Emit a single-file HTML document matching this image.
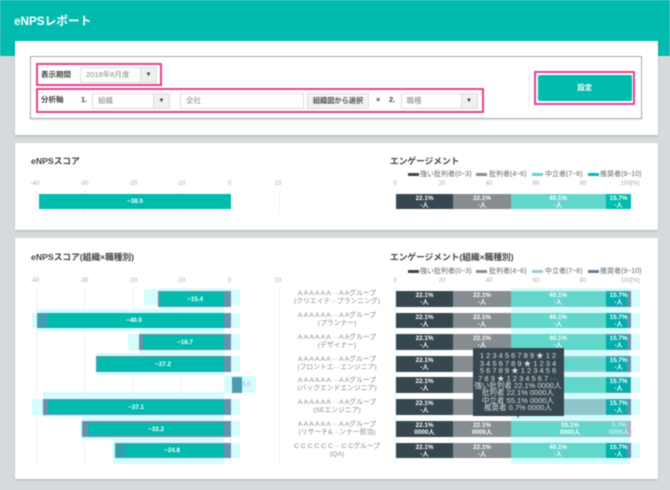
<!DOCTYPE html>
<html lang="ja"><head><meta charset="utf-8"><title>eNPSレポート</title>
<style>
html,body{margin:0;padding:0}
body{width:670px;height:490px;overflow:hidden;background:#d6dadc;font-family:"Liberation Sans","Noto Sans CJK JP",sans-serif;color:#444}
#w{position:relative;width:670px;height:490px;overflow:hidden;filter:blur(.5px)}
#w div{position:absolute;box-sizing:border-box;white-space:nowrap}
.card{background:#fff;left:15px;width:643px;box-shadow:0 1px 2px rgba(0,0,0,.18)}
.pk{border:2.3px solid #e8428f}
.sel{background:#fff;border:1px solid #ddd;font-size:7.5px;color:#888;line-height:14px;padding-left:5px;border-radius:1px}
.sel i{position:absolute;right:0;top:0;bottom:0;width:15px;background:#f0f0f0;border-left:1px solid #ddd;font-style:normal;font-size:6px;color:#333;text-align:center}
.lb{font-size:7.5px;font-weight:bold;color:#444;line-height:10px}
.h{font-size:8.7px;font-weight:bold;color:#444;line-height:12px}
.t{font-size:6px;color:#aaa;line-height:8px;transform:translateX(-50%)}
.g{width:1px;background:#f0f0f0}
.lg{font-size:7px;color:#666;line-height:9px}
.ln{height:2.5px;width:11px}
.c{background:#d3fdfd}
.bl{background:#6c8fae}
.te{background:#00bbae}
.v{font-size:6.3px;font-weight:bold;color:#fff;line-height:7px;transform:translate(-50%,1px);text-align:center}
.n{font-size:6.8px;color:#888;line-height:8px;width:110px;left:282px;text-align:center}
.d{background:#37474f}.y{background:#858d90}.l{background:#62d6cb}
.tip{font-size:7.5px;color:#ddd;line-height:7.4px;text-align:center;transform:translateX(-50%);left:518px}
</style></head><body><div id="w">
<div style="left:0;top:0;width:670px;height:56px;background:#00bbae"></div>
<div style="left:14px;top:13.5px;font-size:11.7px;font-weight:bold;color:#fff;line-height:16px">eNPSレポート</div>

<div class="card" style="top:40.5px;height:94.5px"></div>
<div style="left:30px;top:56px;width:612px;height:63px;border:1px solid #aaa;box-shadow:0 1px 1px rgba(0,0,0,.1)"></div>
<div class="pk" style="left:36px;top:62.5px;width:126px;height:23.5px"></div>
<div class="lb" style="left:41px;top:70px">表示期間</div>
<div class="sel" style="left:80px;top:67px;width:77px;height:16px">2018年8月度<i>▼</i></div>
<div class="pk" style="left:36px;top:87.5px;width:448px;height:25.5px"></div>
<div class="lb" style="left:41px;top:95px">分析軸</div>
<div class="lb" style="left:81px;top:95px">1.</div>
<div class="sel" style="left:92px;top:92.5px;width:78px;height:16px">組織<i>▼</i></div>
<div class="sel" style="left:180px;top:92.5px;width:124px;height:16px">全社</div>
<div class="sel" style="left:307px;top:92.5px;width:62px;height:16px;background:#f3f3f3;padding:0;text-align:center;color:#555;font-weight:bold;font-size:7.2px">組織図から選択</div>
<div class="lb" style="left:376px;top:95px">×</div>
<div class="lb" style="left:389px;top:95px">2.</div>
<div class="sel" style="left:400.5px;top:92.5px;width:77px;height:16px">職種<i>▼</i></div>
<div style="left:528px;top:67px;width:1px;height:41px;background:#eee"></div>
<div class="pk" style="left:533.7px;top:70.7px;width:101.5px;height:34px"></div>
<div style="left:538px;top:74.5px;width:93.5px;height:26px;background:#00bbae;border-radius:2px;color:#fff;font-size:7.5px;font-weight:bold;text-align:center;line-height:26px">設定</div>

<div class="card" style="top:143px;height:87px"></div>
<div class="h" style="left:31px;top:154.5px">eNPSスコア</div>
<div class="h" style="left:390px;top:154.5px">エンゲージメント</div>
<div class="t" style="left:35px;top:180px">-40</div><div class="t" style="left:84px;top:180px">-30</div><div class="t" style="left:133px;top:180px">-20</div><div class="t" style="left:181px;top:180px">-10</div><div class="t" style="left:229.5px;top:180px">0</div><div class="t" style="left:278px;top:180px">10</div>
<div class="g" style="left:36px;top:190px;height:23px"></div><div class="g" style="left:84px;top:190px;height:23px"></div><div class="g" style="left:133px;top:190px;height:23px"></div><div class="g" style="left:181px;top:190px;height:23px"></div><div class="g" style="left:230px;top:190px;height:23px"></div><div class="g" style="left:279px;top:190px;height:23px"></div>
<div class="te" style="left:39px;top:193.5px;width:191.5px;height:15.5px"></div>
<div class="v" style="left:135px;top:197px">−38.5</div>
<div class="ln d" style="left:407.5px;top:173px"></div><div class="lg" style="left:420px;top:170px">強い批判者(0~3)</div>
<div class="ln y" style="left:476px;top:173px"></div><div class="lg" style="left:489px;top:170px">批判者(4~6)</div>
<div class="ln l" style="left:532px;top:173px"></div><div class="lg" style="left:545px;top:170px">中立者(7~8)</div>
<div class="ln te" style="left:588px;top:173px"></div><div class="lg" style="left:600px;top:170px">推奨者(9~10)</div>
<div class="t" style="left:395px;top:180px">0</div><div class="t" style="left:442px;top:180px">20</div><div class="t" style="left:489px;top:180px">40</div><div class="t" style="left:536px;top:180px">60</div><div class="t" style="left:583px;top:180px">80</div><div class="t" style="left:630px;top:180px">100[%]</div>
<div class="d" style="left:395.5px;top:193.5px;width:57.5px;height:15.5px"></div><div class="y" style="left:453px;top:193.5px;width:57.5px;height:15.5px"></div><div class="l" style="left:510.5px;top:193.5px;width:95.5px;height:15.5px"></div><div class="te" style="left:606px;top:193.5px;width:25px;height:15.5px"></div>
<div class="v" style="left:424.5px;top:193.5px">22.1%<br>-人</div><div class="v" style="left:482px;top:193.5px">22.1%<br>-人</div><div class="v" style="left:558px;top:193.5px">40.1%<br>-人</div><div class="v" style="left:618.5px;top:193.5px">15.7%<br>-人</div>

<div class="card" style="top:238px;height:241px"></div>
<div class="h" style="left:31px;top:251px">eNPSスコア(組織×職種別)</div>
<div class="h" style="left:390px;top:251px">エンゲージメント(組織×職種別)</div>
<div class="t" style="left:35px;top:277px">-40</div><div class="t" style="left:84px;top:277px">-30</div><div class="t" style="left:133px;top:277px">-20</div><div class="t" style="left:181px;top:277px">-10</div><div class="t" style="left:229.5px;top:277px">0</div><div class="t" style="left:278px;top:277px">10</div>
<div class="g" style="left:36px;top:288px;height:176px"></div><div class="g" style="left:84px;top:288px;height:176px"></div><div class="g" style="left:133px;top:288px;height:176px"></div><div class="g" style="left:181px;top:288px;height:176px"></div><div class="g" style="left:230px;top:288px;height:176px"></div><div class="g" style="left:279px;top:288px;height:176px"></div><div class="g" style="left:395px;top:288px;height:176px"></div>

<!-- left rows: cyan -->
<div class="c" style="left:144px;top:288.5px;width:96px;height:16px"></div><div class="c" style="left:160px;top:288px;width:64px;height:21px"></div>
<div class="c" style="left:32px;top:312.5px;width:208px;height:15.5px"></div><div class="c" style="left:37px;top:309px;width:187px;height:22px"></div>
<div class="c" style="left:128px;top:334px;width:112px;height:15.5px"></div><div class="c" style="left:139px;top:331px;width:85px;height:22px"></div>
<div class="c" style="left:96px;top:356px;width:144px;height:15.5px"></div><div class="c" style="left:96px;top:353px;width:128px;height:22px"></div>
<div class="c" style="left:224px;top:376px;width:32px;height:17px"></div>
<div class="c" style="left:32px;top:399px;width:208px;height:15.5px"></div><div class="c" style="left:43px;top:392px;width:181px;height:25px"></div>
<div class="c" style="left:80px;top:421px;width:160px;height:15.5px"></div><div class="c" style="left:82px;top:417px;width:142px;height:23px"></div>
<div class="c" style="left:112px;top:442.5px;width:128px;height:15.5px"></div><div class="c" style="left:113px;top:440px;width:111px;height:24px"></div>
<!-- left rows: blue + teal -->
<div class="bl" style="left:157.5px;top:291px;width:73px;height:15.5px"></div><div class="te" style="left:160px;top:292px;width:64px;height:13.5px"></div><div class="v" style="left:195px;top:294.5px">−15.4</div>
<div class="bl" style="left:36.5px;top:312.5px;width:194px;height:15.5px"></div><div class="te" style="left:48px;top:312.5px;width:176px;height:15.5px"></div><div style="left:37.5px;top:312.5px;width:10.5px;height:15.5px;background:#3a9fae"></div><div class="v" style="left:134px;top:316px">−40.0</div>
<div class="bl" style="left:139px;top:334px;width:91.5px;height:15.5px"></div><div class="te" style="left:143px;top:335px;width:81px;height:13.5px"></div><div class="v" style="left:185px;top:337.5px">−18.7</div>
<div class="bl" style="left:96px;top:356px;width:134.5px;height:15.5px"></div><div class="te" style="left:97px;top:357px;width:127px;height:13.5px"></div><div class="v" style="left:163px;top:359.5px">−27.2</div>
<div style="left:231.5px;top:377px;width:10px;height:15.5px;background:#4a9bb0"></div><div style="left:242px;top:381px;font-size:6px;color:#aaa;line-height:8px">3.0</div>
<div class="bl" style="left:42.5px;top:399px;width:188px;height:15.5px"></div><div class="te" style="left:48px;top:400px;width:176px;height:13.5px"></div><div class="v" style="left:136px;top:402.5px">−37.1</div>
<div class="bl" style="left:82px;top:421px;width:148.5px;height:15.5px"></div><div class="te" style="left:88px;top:422.5px;width:136px;height:12.5px"></div><div class="v" style="left:156px;top:424.5px">−32.2</div>
<div class="bl" style="left:115px;top:442.5px;width:115.5px;height:15.5px"></div><div class="te" style="left:125px;top:443.5px;width:99px;height:13.5px"></div><div style="left:115px;top:443.5px;width:10px;height:13.5px;background:#2f9fb0"></div><div class="v" style="left:172px;top:446px">−24.8</div>

<!-- names -->
<div class="n" style="top:290px">A A A A A A ···A Aグループ<br>(クリエイテ···プランニング)</div>
<div class="n" style="top:312px">A A A A A A ···A Aグループ<br>(プランナー)</div>
<div class="n" style="top:334px">A A A A A A ···A Aグループ<br>(デザイナー)</div>
<div class="n" style="top:355.5px">A A A A A A ···A Aグループ<br>(フロントエ···エンジニア)</div>
<div class="n" style="top:377px">A A A A A A ···A Aグループ<br>(バックエンドエンジニア)</div>
<div class="n" style="top:399px">A A A A A A ···A Aグループ<br>(SEエンジニア)</div>
<div class="n" style="top:421px">A A A A A A ···A Aグループ<br>(リサーチ&amp;···ンナー担当)</div>
<div class="n" style="top:442.5px">C C C C C C ···C Cグループ<br>(QA)</div>

<!-- right header -->
<div class="ln d" style="left:407.5px;top:270px"></div><div class="lg" style="left:420px;top:267px">強い批判者(0~3)</div>
<div class="ln y" style="left:476px;top:270px"></div><div class="lg" style="left:489px;top:267px">批判者(4~6)</div>
<div class="ln" style="left:532px;top:270px;background:#a3c4d6"></div><div class="lg" style="left:545px;top:267px">中立者(7~8)</div>
<div class="ln" style="left:588px;top:270px;background:#5f7fa8"></div><div class="lg" style="left:600px;top:267px">推奨者(9~10)</div>
<div class="t" style="left:395px;top:277px">0</div><div class="t" style="left:442px;top:277px">20</div><div class="t" style="left:489px;top:277px">40</div><div class="t" style="left:536px;top:277px">60</div><div class="t" style="left:583px;top:277px">80</div><div class="t" style="left:630px;top:277px">100[%]</div>

<!-- right cyan -->
<div class="c" style="left:511px;top:288px;width:119px;height:176px"></div>
<div class="c" style="left:630px;top:288.5px;width:10px;height:18px"></div><div class="c" style="left:630px;top:312.5px;width:10px;height:15.5px"></div><div class="c" style="left:630px;top:334px;width:10px;height:15.5px"></div><div class="c" style="left:630px;top:356px;width:10px;height:15.5px"></div><div class="c" style="left:630px;top:377px;width:10px;height:15.5px"></div><div class="c" style="left:630px;top:399px;width:10px;height:15.5px"></div><div class="c" style="left:630px;top:442.5px;width:10px;height:15.5px"></div>

<!-- right rows -->
<div class="d" style="left:395.5px;top:291px;width:57.5px;height:15.5px"></div><div class="y" style="left:453px;top:291px;width:58px;height:15.5px"></div><div style="left:511px;top:291px;width:95px;height:15.5px;background:#9cc7cf"></div><div class="l" style="left:511px;top:292px;width:95px;height:13.5px"></div><div class="bl" style="left:606px;top:291px;width:24.5px;height:15.5px"></div><div class="te" style="left:606px;top:291.5px;width:21px;height:14px;background:#00aeac"></div>
<div class="d" style="left:395.5px;top:312.5px;width:57.5px;height:15.5px"></div><div class="y" style="left:453px;top:312.5px;width:58px;height:15.5px"></div><div class="l" style="left:511px;top:312.5px;width:95px;height:15.5px"></div><div class="bl" style="left:606px;top:312.5px;width:24.5px;height:15.5px"></div><div class="te" style="left:606px;top:313px;width:21px;height:14.5px;background:#00aeac"></div>
<div class="d" style="left:395.5px;top:334px;width:57.5px;height:15.5px"></div><div class="y" style="left:453px;top:334px;width:58px;height:15.5px"></div><div class="l" style="left:511px;top:334px;width:95px;height:15.5px"></div><div class="bl" style="left:606px;top:334px;width:24.5px;height:15.5px"></div><div class="te" style="left:606px;top:334.5px;width:21px;height:14.5px;background:#00aeac"></div>
<div class="d" style="left:395.5px;top:356px;width:57.5px;height:15.5px"></div><div class="y" style="left:453px;top:356px;width:58px;height:15.5px"></div><div style="left:511px;top:356px;width:95px;height:15.5px;background:#9cc7cf"></div><div class="l" style="left:511px;top:358px;width:95px;height:11.5px"></div><div class="bl" style="left:606px;top:356px;width:24.5px;height:15.5px"></div><div class="te" style="left:606px;top:356.5px;width:21px;height:14.5px;background:#00aeac"></div>
<div class="d" style="left:395.5px;top:377px;width:57.5px;height:15.5px"></div><div class="y" style="left:453px;top:377px;width:58px;height:15.5px"></div><div class="l" style="left:511px;top:377px;width:95px;height:15.5px"></div><div class="bl" style="left:606px;top:377px;width:24.5px;height:15.5px"></div><div class="te" style="left:606px;top:377.5px;width:24px;height:14.5px;background:#00aeac"></div>
<div class="d" style="left:395.5px;top:399px;width:57.5px;height:15.5px"></div><div class="y" style="left:453px;top:399px;width:58px;height:15.5px"></div><div style="left:511px;top:399px;width:95px;height:15.5px;background:#8fc6cc"></div><div class="bl" style="left:606px;top:399px;width:24.5px;height:15.5px"></div><div class="te" style="left:606px;top:399.5px;width:21px;height:14.5px;background:#00aeac"></div>
<div class="d" style="left:395.5px;top:421px;width:57.5px;height:15.5px"></div><div class="y" style="left:453px;top:421px;width:58px;height:15.5px"></div><div style="left:511px;top:421px;width:119.5px;height:15.5px;background:#a3b8cc"></div><div class="l" style="left:511px;top:422px;width:115px;height:13.5px"></div>
<div class="d" style="left:395.5px;top:442.5px;width:57.5px;height:15.5px"></div><div class="y" style="left:453px;top:442.5px;width:58px;height:15.5px"></div><div class="l" style="left:511px;top:442.5px;width:95px;height:15.5px"></div><div class="bl" style="left:606px;top:442.5px;width:24.5px;height:15.5px"></div><div class="te" style="left:606px;top:443px;width:21px;height:14.5px;background:#00aeac"></div>

<div class="v" style="left:424.5px;top:291px">22.1%<br>-人</div><div class="v" style="left:482px;top:291px">22.1%<br>-人</div><div class="v" style="left:558px;top:291px">40.1%<br>-人</div><div class="v" style="left:618.5px;top:291px">15.7%<br>-人</div>
<div class="v" style="left:424.5px;top:312.5px">22.1%<br>-人</div><div class="v" style="left:482px;top:312.5px">22.1%<br>-人</div><div class="v" style="left:558px;top:312.5px">40.1%<br>-人</div><div class="v" style="left:618.5px;top:312.5px">15.7%<br>-人</div>
<div class="v" style="left:424.5px;top:334px">22.1%<br>-人</div><div class="v" style="left:482px;top:334px">22.1%<br>-人</div><div class="v" style="left:558px;top:334px">40.1%<br>-人</div><div class="v" style="left:618.5px;top:334px">15.7%<br>-人</div>
<div class="v" style="left:424.5px;top:356px">22.1%<br>-人</div><div class="v" style="left:618.5px;top:356px">15.7%<br>-人</div>
<div class="v" style="left:424.5px;top:377px">22.1%<br>-人</div><div class="v" style="left:618.5px;top:377px">15.7%<br>-人</div>
<div class="v" style="left:424.5px;top:399px">22.1%<br>-人</div><div class="v" style="left:618.5px;top:399px">15.7%<br>-人</div>
<div class="v" style="left:424.5px;top:421px">22.1%<br>0000人</div><div class="v" style="left:482px;top:421px">22.1%<br>0000人</div><div class="v" style="left:570px;top:421px">55.1%<br>0000人</div><div class="v" style="left:619px;top:421px;font-weight:normal">0.7%<br>0000人</div>
<div class="v" style="left:424.5px;top:442.5px">22.1%<br>-人</div><div class="v" style="left:482px;top:442.5px">22.1%<br>-人</div><div class="v" style="left:558px;top:442.5px">40.1%<br>-人</div><div class="v" style="left:618.5px;top:442.5px">15.7%<br>-人</div>

<!-- tooltip -->
<div class="d" style="left:472.5px;top:348px;width:91px;height:68px"></div>
<div style="left:516.5px;top:416px;width:0;height:0;border-left:1.5px solid transparent;border-right:1.5px solid transparent;border-top:2px solid #37474f"></div>
<div class="tip" style="top:352.3px">1 2 3 4 5 6 7 8 9 ★ 1 2<br>3 4 5 6 7 8 9 ★ 1 2 3 4<br>5 6 7 8 9 ★ 1 2 3 4 5 6<br>7 8 9 ★ 1 2 3 4 5 6 7 ···</div>
<div class="tip" style="top:382px">強い批判者 22.1% 0000人<br>批判者 22.1% 0000人<br>中立者 55.1% 0000人<br>推奨者 0.7% 0000人</div>
</div></body></html>
